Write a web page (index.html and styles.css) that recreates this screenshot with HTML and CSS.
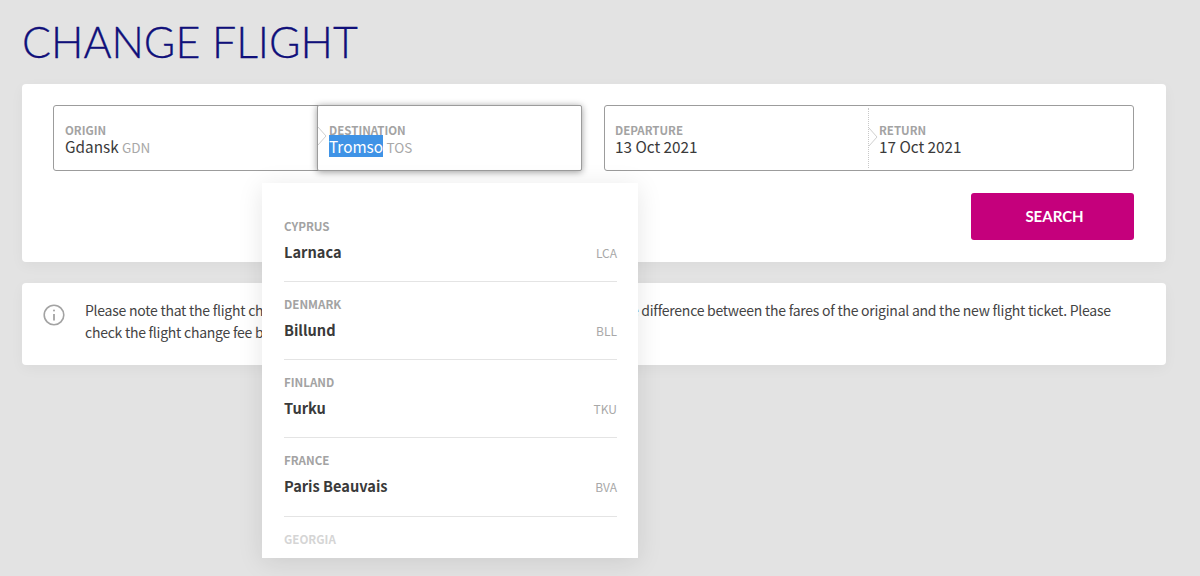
FILE: index.html
```html
<!DOCTYPE html>
<html lang="en">
<head>
    <meta charset="UTF-8">
    <title>Change Flight</title>
    <link rel="stylesheet" href="styles.css">
</head>
<body>
    <div class="page">
        <h1>CHANGE FLIGHT</h1>

        <div class="card search-card">
            <div class="field-row">
                <div class="field-group route-group">
                    <div class="field">
                        <span class="field-label">ORIGIN</span>
                        <span class="field-value">Gdansk <span class="code">GDN</span></span>
                    </div>
                    <div class="field field-active">
                        <svg class="chevron chevron-active" width="10" height="20" viewBox="0 0 10 20"><path d="M0 1 L8 10 L0 19 Z" fill="#fff"/><path d="M0 1 L8 10 L0 19" fill="none" stroke="#cfcfcf"/></svg>
                        <span class="field-label">DESTINATION</span>
                        <span class="field-value"><span class="selected">Tromso</span> <span class="code">TOS</span></span>
                    </div>
                </div>
                <div class="field-group date-group">
                    <div class="field field-depart">
                        <span class="field-label">DEPARTURE</span>
                        <span class="field-value">13 Oct 2021</span>
                    </div>
                    <div class="field field-return">
                        <svg class="chevron" width="10" height="20" viewBox="0 0 10 20"><path d="M0 1 L8 10 L0 19 Z" fill="#fff"/><path d="M0 1 L8 10 L0 19" fill="none" stroke="#cfcfcf"/></svg>
                        <span class="field-label">RETURN</span>
                        <span class="field-value">17 Oct 2021</span>
                    </div>
                </div>
            </div>
            <div class="button-row">
                <button class="search-btn">SEARCH</button>
            </div>

            <div class="dropdown">
                <div class="dropdown-item">
                    <div class="country">CYPRUS</div>
                    <div class="city-row"><span class="city">Larnaca</span><span class="city-code">LCA</span></div>
                </div>
                <div class="dropdown-item">
                    <div class="country">DENMARK</div>
                    <div class="city-row"><span class="city">Billund</span><span class="city-code">BLL</span></div>
                </div>
                <div class="dropdown-item">
                    <div class="country">FINLAND</div>
                    <div class="city-row"><span class="city">Turku</span><span class="city-code">TKU</span></div>
                </div>
                <div class="dropdown-item">
                    <div class="country">FRANCE</div>
                    <div class="city-row"><span class="city">Paris Beauvais</span><span class="city-code">BVA</span></div>
                </div>
                <div class="dropdown-item item-faded">
                    <div class="country">GEORGIA</div>
                </div>
            </div>
        </div>

        <div class="card note-card">
            <svg class="info-icon" width="22" height="22" viewBox="0 0 22 22" fill="none" stroke="#a3a3a3" stroke-width="1.6">
                <circle cx="11" cy="11" r="9.8"/>
                <path d="M11 10 V16.5" stroke-width="1.8"/>
                <circle cx="11" cy="6.6" r="1" fill="#a3a3a3" stroke="none"/>
            </svg>
            <p>Please note that the flight change fee is charged per traveller, per flight, in addition to the difference between the fares of the original and the new flight ticket. Please check the flight change fee before you continue.</p>
        </div>
    </div>
</body>
</html>
```

FILE: styles.css
```css
body {
    font-family: "Noto Sans CJK SC", "Open Sans", sans-serif;
    background-color: #e3e3e3;
    color: #3a3a3a;
    margin: 0;
    height: 576px;
    overflow: hidden;
}
.page {
    padding: 0 34px 0 22px;
}
h1 {
    font-family: Lato, sans-serif;
    font-weight: 300;
    font-size: 42.9px;
    line-height: 52px;
    color: #10107a;
    margin: 0;
    padding: 16px 0 16px;
    -webkit-text-stroke: 0.3px #10107a;
}
.card {
    background: #fff;
    border-radius: 4px;
    box-shadow: 0 4px 14px rgba(0, 0, 0, 0.04);
}
.search-card {
    position: relative;
    height: 178px;
    box-sizing: border-box;
    padding: 21px 32px 0 31px;
    margin-bottom: 21px;
}
.field-row {
    display: flex;
    gap: 22px;
}
.field-group {
    display: flex;
    height: 66px;
    box-sizing: border-box;
    border: 1px solid #9c9c9c;
    border-radius: 3px;
}
.route-group {
    width: 529px;
}
.date-group {
    width: 530px;
}
.field {
    position: relative;
    flex: 1;
    display: flex;
    flex-direction: column;
    padding: 17px 0 0 11px;
    box-sizing: border-box;
}
.field-active {
    margin: -1px -1px -1px 0;
    padding-top: 17px;
    border: 1px solid #9c9c9c;
    border-radius: 2px;
    box-shadow: 0 1px 7px rgba(0, 0, 0, 0.4);
    background: #fff;
}
.field-depart {
    flex: none;
    width: 263px;
    padding-left: 10px;
}
.field-return {
    border-left: 1px dotted #c8c8c8;
    margin: 2px 0;
    padding-top: 15px;
    padding-left: 10px;
}
.chevron {
    position: absolute;
    left: 0;
    top: 19px;
}
.chevron-active {
    top: 20px;
}
.field-label {
    font-size: 11.5px;
    line-height: 14px;
    font-weight: 700;
    color: #a3a3a3;
}
.field-value {
    font-size: 15.3px;
    line-height: 19px;
    color: #3a3a3a;
}
.code {
    font-size: 13.5px;
    color: #a8a8a8;
}
.selected {
    background: #3f93e6;
    color: #fff;
}
.button-row {
    display: flex;
    justify-content: flex-end;
    margin-top: 22px;
}
.search-btn {
    width: 163px;
    height: 47px;
    padding: 0 0 2px 4px;
    background-color: #c5007c;
    color: #fff;
    font-family: Lato, sans-serif;
    font-size: 15px;
    font-weight: 700;
    border: none;
    border-radius: 3px;
}
.note-card {
    display: flex;
    height: 82px;
    box-sizing: border-box;
    padding: 16px 46px 0 21px;
}
.info-icon {
    flex: none;
    margin: 5px 20px 0 0;
}
.note-card p {
    margin: 0;
    font-size: 14px;
    letter-spacing: -0.25px;
    line-height: 22px;
    color: #444;
}
.dropdown {
    position: absolute;
    left: 240px;
    top: 99px;
    width: 376px;
    height: 375px;
    box-sizing: border-box;
    padding: 33px 21px 0 22px;
    background: #fff;
    box-shadow: 0 4px 24px rgba(0, 0, 0, 0.1);
    overflow: hidden;
}
.dropdown-item {
    height: 78.2px;
    box-sizing: border-box;
    padding-top: 14px;
    border-bottom: 1px solid #e4e4e4;
}
.dropdown-item:first-child {
    height: 66px;
    padding-top: 2px;
}
.item-faded {
    border-bottom: none;
    opacity: 0.45;
}
.country {
    font-size: 11.6px;
    line-height: 16px;
    font-weight: 700;
    color: #a3a3a3;
}
.city-row {
    display: flex;
    justify-content: space-between;
    align-items: center;
    margin-top: 8px;
}
.city {
    font-size: 14.6px;
    line-height: 20px;
    font-weight: 700;
    color: #3a3a3a;
}
.city-code {
    font-size: 12px;
    color: #a8a8a8;
}
```
